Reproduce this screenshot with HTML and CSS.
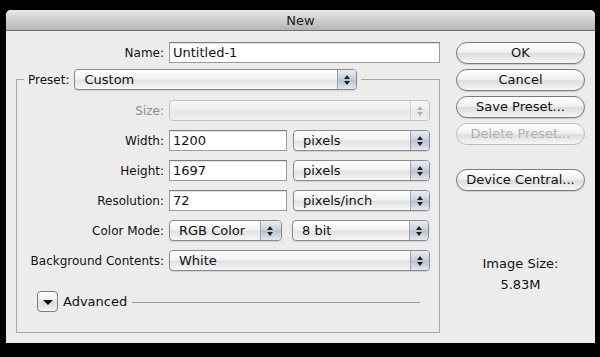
FILE: index.html
```html
<!DOCTYPE html>
<html lang="en">
<head>
    <meta charset="UTF-8">
    <meta name="viewport" content="width=device-width, initial-scale=1.0">
    <title>New</title>
    <link rel="stylesheet" href="styles.css">
</head>
<body>
    <div class="dialog">
        <div class="titlebar">New</div>
        <div class="content">
            <div class="left">
                <!-- Name -->
                <div class="row name-row">
                    <label>Name:</label>
                    <div class="field name-field">Untitled-1</div>
                </div>

                <fieldset class="group">
                    <legend>
                        <span class="legend-label">Preset:</span>
                        <div class="popup preset-popup"><span>Custom</span><i class="cap"></i></div>
                    </legend>

                    <div class="rows">
                        <div class="row">
                            <label class="disabled">Size:</label>
                            <div class="popup size-popup disabled"><span></span><i class="cap"></i></div>
                        </div>
                        <div class="row">
                            <label>Width:</label>
                            <div class="field num-field">1200</div>
                            <div class="popup unit-popup"><span>pixels</span><i class="cap"></i></div>
                        </div>
                        <div class="row">
                            <label>Height:</label>
                            <div class="field num-field">1697</div>
                            <div class="popup unit-popup"><span>pixels</span><i class="cap"></i></div>
                        </div>
                        <div class="row">
                            <label>Resolution:</label>
                            <div class="field num-field">72</div>
                            <div class="popup unit-popup"><span>pixels/inch</span><i class="cap"></i></div>
                        </div>
                        <div class="row">
                            <label>Color Mode:</label>
                            <div class="popup mode-popup"><span>RGB Color</span><i class="cap"></i></div>
                            <div class="popup unit-popup bits"><span>8 bit</span><i class="cap"></i></div>
                        </div>
                        <div class="row">
                            <label class="bg-label">Background Contents:</label>
                            <div class="popup bg-popup"><span>White</span><i class="cap"></i></div>
                        </div>
                    </div>

                    <div class="advanced">
                        <div class="disclosure"><i></i></div>
                        <span>Advanced</span>
                        <div class="rule"></div>
                    </div>
                </fieldset>
            </div>

            <div class="right">
                <div class="btn">OK</div>
                <div class="btn">Cancel</div>
                <div class="btn save">Save Preset...</div>
                <div class="btn disabled">Delete Preset...</div>
                <div class="btn device">Device Central...</div>

                <div class="image-size">
                    <div>Image Size:</div>
                    <div class="size-value">5.83M</div>
                </div>
            </div>
        </div>
    </div>
</body>
</html>
```

FILE: styles.css
```css
body {
    margin: 0;
    padding: 10px 0 0 6px;
    background: #000;
    font-family: "DejaVu Sans", Verdana, sans-serif;
    font-size: 12px;
    color: #111;
}
.dialog {
    width: 589px;
    height: 333px;
    background: #ececec;
    border-radius: 5px 5px 0 0;
    overflow: hidden;
}
.titlebar {
    height: 21px;
    line-height: 21px;
    text-align: center;
    font-size: 13px;
    color: #1a1a1a;
    background: linear-gradient(#e9e9e9, #c9c9c9 60%, #b5b5b5);
    border-bottom: 1px solid #6e6e6e;
    box-sizing: border-box;
}
.content {
    display: flex;
    padding: 11px 0 0 10px;
}
.left {
    width: 424px;
}
.row {
    display: flex;
    align-items: center;
    height: 21px;
}
label {
    width: 148px;
    margin-right: 5px;
    text-align: right;
}
label.disabled {
    color: #8c8c8c;
}
.field {
    height: 21px;
    box-sizing: border-box;
    background: #fff;
    border: 1px solid #9a9a9a;
    border-top-color: #7c7c7c;
    box-shadow: inset 0 1px 1px rgba(0, 0, 0, 0.12);
    padding: 0 3px;
    line-height: 19px;
    font-size: 13px;
}
.name-field {
    width: 271px;
}
.num-field {
    width: 118px;
    margin-right: 6px;
}

/* Preset group */
.group {
    margin: 6px 0 0 0;
    padding: 0;
    width: 424px;
    height: 264px;
    box-sizing: border-box;
    border: 1px solid #a6a6a6;
}
.group legend {
    display: flex;
    align-items: center;
    margin-left: 7px;
    padding: 0 4px;
}
.legend-label {
    margin-right: 5px;
}
.rows {
    display: flex;
    flex-direction: column;
    gap: 9px;
    padding-top: 10px;
}
.rows label {
    width: 147px;
}

/* Popup menus */
.popup {
    display: flex;
    align-items: center;
    height: 21px;
    box-sizing: border-box;
    border: 1px solid #8a8a8a;
    border-radius: 4px;
    background: linear-gradient(#ffffff, #f3f3f3 45%, #e2e2e2 55%, #f6f6f6);
    box-shadow: 0 1px 1px rgba(0, 0, 0, 0.12);
    font-size: 13px;
}
.popup span {
    flex: 1;
    padding-left: 9px;
}
.popup .cap {
    position: relative;
    width: 18px;
    height: 19px;
    border-left: 1px solid #9aa2ae;
    border-radius: 0 3px 3px 0;
    background: linear-gradient(#e9edf3, #c9d0da 48%, #b7c0cd 52%, #e3e8ef);
}
.popup .cap::before,
.popup .cap::after {
    content: "";
    position: absolute;
    left: 6px;
    border-left: 3px solid transparent;
    border-right: 3px solid transparent;
}
.popup .cap::before {
    top: 5px;
    border-bottom: 4px solid #222;
}
.popup .cap::after {
    top: 11px;
    border-top: 4px solid #222;
}
.popup.disabled {
    border-color: #c4c4c4;
    background: linear-gradient(#f7f7f7, #ededed 50%, #e6e6e6 55%, #f1f1f1);
    box-shadow: none;
}
.popup.disabled .cap {
    border-left-color: #d2d2d2;
    background: transparent;
}
.popup.disabled .cap::before { border-bottom-color: #b0b0b0; }
.popup.disabled .cap::after { border-top-color: #b0b0b0; }

.preset-popup { width: 283px; }
.size-popup { width: 261px; }
.unit-popup { width: 137px; }
.mode-popup { width: 113px; margin-right: 10px; }
.bg-popup { width: 261px; }
.mode-popup .cap { width: 20px; }

/* Advanced */
.advanced {
    display: flex;
    align-items: center;
    margin: 20px 0 0 20px;
}
.disclosure {
    position: relative;
    width: 21px;
    height: 21px;
    box-sizing: border-box;
    border: 1px solid #7c7c7c;
    border-radius: 4px;
    background: linear-gradient(#ffffff, #e9e9e9 50%, #dadada 55%, #f4f4f4);
    margin-right: 5px;
}
.disclosure i {
    position: absolute;
    left: 5px;
    top: 8px;
    border-left: 5px solid transparent;
    border-right: 5px solid transparent;
    border-top: 5px solid #111;
}
.advanced span {
    font-size: 13px;
}
.advanced .rule {
    width: 288px;
    height: 1px;
    margin-left: 5px;
    margin-top: 2px;
    background: #9c9c9c;
}

/* Buttons column */
.right {
    width: 129px;
    margin-left: 16px;
}
.btn {
    height: 22px;
    box-sizing: border-box;
    border: 1px solid #7a7a7a;
    border-radius: 11px;
    background: linear-gradient(#ffffff, #f1f1f1 45%, #dcdcdc 55%, #f7f7f7);
    box-shadow: 0 1px 1px rgba(0, 0, 0, 0.15);
    text-align: center;
    line-height: 20px;
    font-size: 13px;
    margin-bottom: 5px;
}
.btn.save {
    margin-top: 2px;
}
.btn.disabled {
    color: #b0b0b0;
    border-color: #bcbcbc;
    box-shadow: none;
}
.btn.device {
    margin-top: 24px;
}
.image-size {
    margin-top: 65px;
    text-align: center;
    font-size: 13px;
}
.size-value {
    margin-top: 6px;
}
```
